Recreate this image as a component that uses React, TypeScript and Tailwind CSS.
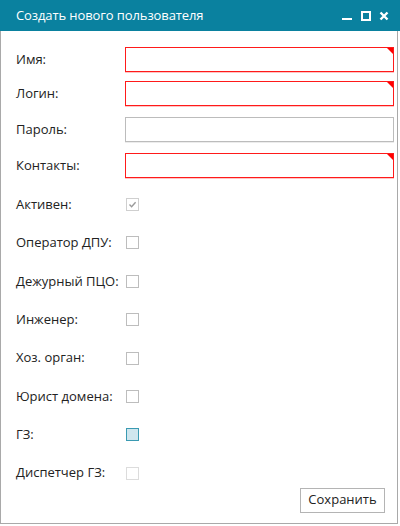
import React from "react"

const font = { fontFamily: '"Open Sans", "Noto Sans", sans-serif' }

type Field = { label: string; required?: boolean; gap: string }
type Flag = { label: string; state: "checked" | "off" | "hover" | "disabled" }

const fields: Field[] = [
  { label: "Имя:", required: true, gap: "mt-0" },
  { label: "Логин:", required: true, gap: "mt-[9px]" },
  { label: "Пароль:", gap: "mt-[11px]" },
  { label: "Контакты:", required: true, gap: "mt-[11px]" },
]

const flags: Flag[] = [
  { label: "Активен:", state: "checked" },
  { label: "Оператор ДПУ:", state: "off" },
  { label: "Дежурный ПЦО:", state: "off" },
  { label: "Инженер:", state: "off" },
  { label: "Хоз. орган:", state: "off" },
  { label: "Юрист домена:", state: "off" },
  { label: "ГЗ:", state: "hover" },
  { label: "Диспетчер ГЗ:", state: "disabled" },
]

function Box({ state }: { state: Flag["state"] }) {
  if (state === "checked") {
    return (
      <span className="w-[13px] h-[13px] border border-[#cfcfcf] bg-white flex items-center justify-center">
        <svg width="9" height="9" viewBox="0 0 9 9">
          <path d="M1.5 4.6 L3.6 6.7 L7.6 2.2" fill="none" stroke="#9a9a9a" strokeWidth="1.4" />
        </svg>
      </span>
    )
  }
  if (state === "hover") {
    return <span className="w-[13px] h-[13px] border border-[#3a9ab2] bg-[#cfe6ee]" />
  }
  if (state === "disabled") {
    return <span className="w-[13px] h-[13px] border border-[#dcdcdc] bg-white" />
  }
  return <span className="w-[13px] h-[13px] border border-[#bdbdbd] bg-white" />
}

export default function App() {
  return (
    <div className="w-[400px] h-[526px] bg-white text-[13px] text-[#222]" style={font}>
      {/* title bar */}
      <div className="h-[31px] bg-[#0a819f] flex items-center pl-4 pr-[11px] text-white">
        <span className="text-[13px] tracking-[-0.1px]">Создать нового пользователя</span>
        <div className="ml-auto flex items-center">
          <span className="w-[10px] h-[2px] bg-white mt-[7px] mr-[9px]" />
          <span className="w-[10px] h-[10px] border-2 border-white mr-[8px]" />
          <svg width="10" height="10" viewBox="0 0 10 10">
            <path d="M1.5 1.5 L8.5 8.5 M8.5 1.5 L1.5 8.5" stroke="white" strokeWidth="2.4" />
          </svg>
        </div>
      </div>

      {/* body */}
      <div className="w-[398px] h-[493px] border-l border-r border-b border-[#a9a9a9] flex flex-col pt-[16px] pl-[15px] pr-[3px]">
        <div className="flex flex-col">
          {fields.map((f) => (
            <div key={f.label} className={"flex items-center h-[25px] " + f.gap}>
              <span className="w-[109px]">{f.label}</span>
              <div
                className={
                  "relative w-[269px] h-[25px] bg-white border " +
                  (f.required
                    ? "border-[#ff1a1a] shadow-[0_1px_0_#ffc4c4]"
                    : "border-[#bcbcbc] shadow-[0_1px_0_#ececec]")
                }
              >
                {f.required && (
                  <span className="absolute top-0 right-0 w-0 h-0 border-t-[6px] border-l-[6px] border-t-[#ff0000] border-l-transparent" />
                )}
              </div>
            </div>
          ))}
        </div>

        <div className="flex flex-col gap-[25.4px] mt-[20px]">
          {flags.map((f) => (
            <div key={f.label} className="flex items-center h-[13px]">
              <span className="w-[110px] whitespace-nowrap">{f.label}</span>
              <Box state={f.state} />
            </div>
          ))}
        </div>

        <div className="flex justify-end mt-[8px] pr-[9px]">
          <button className="w-[85px] h-[25px] border border-[#b4b4b4] bg-white text-[13px] text-[#222]" style={font}>
            Сохранить
          </button>
        </div>
      </div>
    </div>
  )
}
